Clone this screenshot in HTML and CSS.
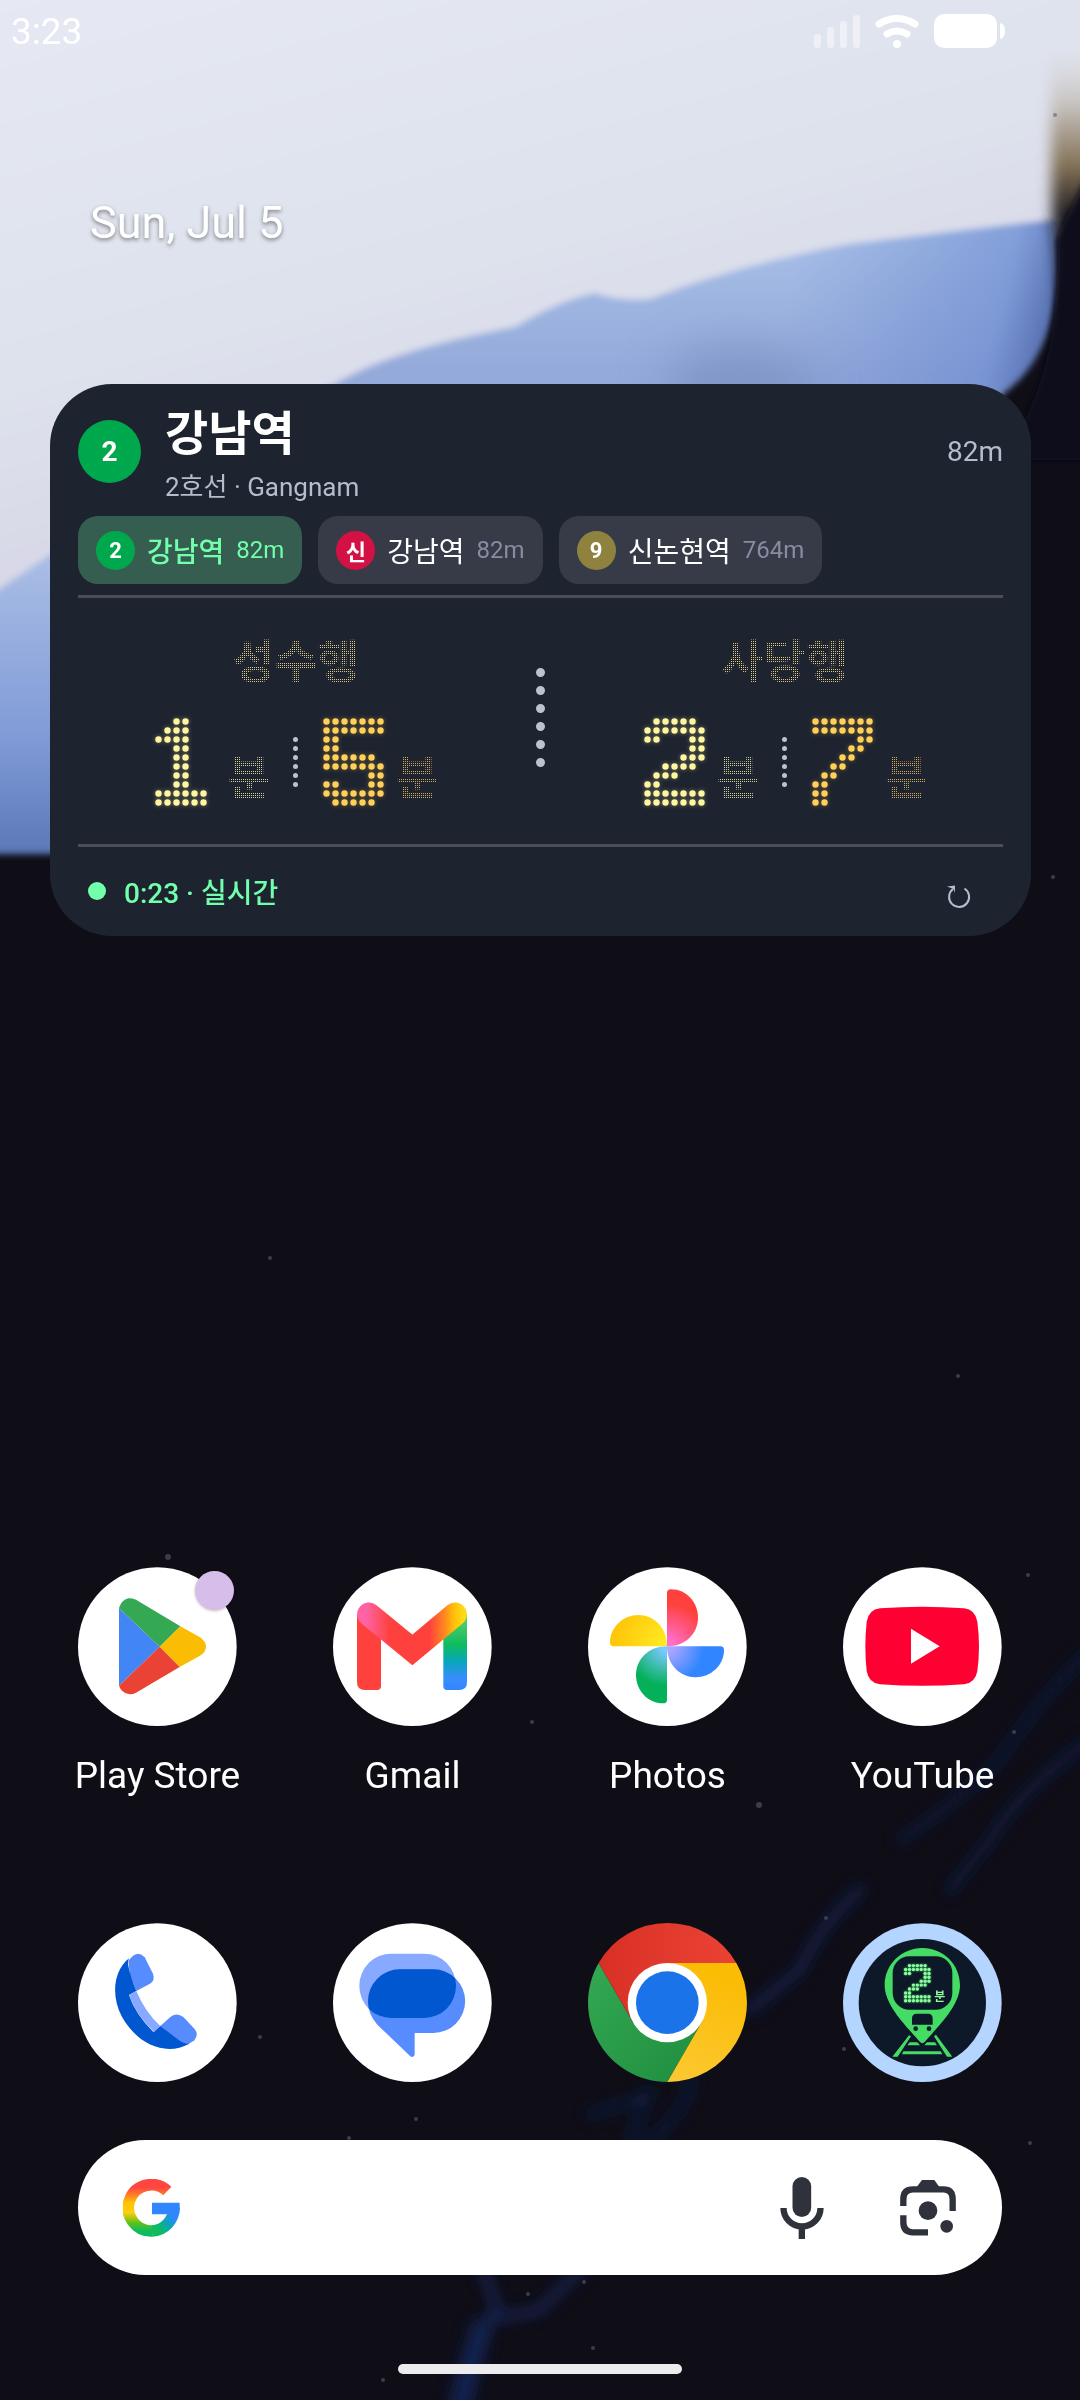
FILE: index.html
```html
<!DOCTYPE html>
<html lang="ko">
  <head>
    <meta charset="UTF-8" />
    <meta name="viewport" content="width=device-width, initial-scale=1.0" />
    <title>Home</title>
    <link rel="stylesheet" href="styles.css">
  </head>
  <body>
    <!-- Wallpaper -->
    <svg class="wallpaper" viewBox="0 0 1080 2400" preserveAspectRatio="none" aria-hidden="true">
      <defs>
        <linearGradient id="sky" x1="0" y1="0" x2="0.35" y2="1">
          <stop offset="0" stop-color="#e6e9f4" />
          <stop offset="0.45" stop-color="#dde1ec" />
          <stop offset="0.65" stop-color="#d7d6e6" />
          <stop offset="1" stop-color="#cfcfe4" />
        </linearGradient>
        <linearGradient id="hill" x1="0" y1="0" x2="0" y2="1">
          <stop offset="0" stop-color="#a9c1e8" />
          <stop offset="0.25" stop-color="#94a9da" />
          <stop offset="0.55" stop-color="#a7bbe4" />
          <stop offset="0.82" stop-color="#7f9ad6" />
          <stop offset="1" stop-color="#5c78b8" />
        </linearGradient>
        <linearGradient id="hillSide" gradientUnits="userSpaceOnUse" x1="800" y1="240" x2="1055" y2="300">
          <stop offset="0" stop-color="#5f80cc" stop-opacity="0" />
          <stop offset="0.8" stop-color="#5f80cc" stop-opacity="0.5" />
          <stop offset="1" stop-color="#4760a4" stop-opacity="0.8" />
        </linearGradient>
        <linearGradient id="rust" x1="0" y1="0" x2="0" y2="1">
          <stop offset="0" stop-color="#d9d6d6" stop-opacity="0" />
          <stop offset="0.15" stop-color="#c4bfbb" />
          <stop offset="0.3" stop-color="#857459" />
          <stop offset="0.45" stop-color="#14131b" />
        </linearGradient>
        <filter id="soft" x="-10%" y="-10%" width="120%" height="120%"><feGaussianBlur stdDeviation="3" /></filter>
        <filter id="haze" filterUnits="userSpaceOnUse" x="0" y="0" width="1080" height="2400"><feGaussianBlur stdDeviation="7" /></filter>
        <filter id="smudge" x="-60%" y="-60%" width="220%" height="220%"><feGaussianBlur stdDeviation="24" /></filter>
      </defs>
      <rect width="1080" height="2400" fill="#0f0e17" />
      <g filter="url(#soft)">
        <path d="M-20 -20H1100V210L1057 240L1000 400L400 850H-20Z" fill="url(#sky)" />
        <path d="M-20 602L50 555Q180 450 335 384Q390 350 515 327Q560 300 595 293Q620 302 650 299Q740 264 850 244L1057 219C1062 300 1052 360 1000 396L700 700L100 854H-20Z" fill="url(#hill)" />
        <path d="M800 253L850 244L1057 219C1062 300 1052 360 1000 396L700 700Z" fill="url(#hillSide)" />
      </g>
      <ellipse cx="740" cy="385" rx="75" ry="40" fill="#6d82b3" opacity="0.5" filter="url(#smudge)" />
      <path d="M1050 50H1100V430H1062Q1064 300 1052 215Z" fill="url(#rust)" filter="url(#haze)" />
      <path d="M1058 235L1100 150V460H1000Q1062 380 1058 235Z" fill="#11101a" filter="url(#soft)" />
      <g fill="none" stroke="#1b2a68" stroke-linecap="round" filter="url(#haze)">
        <path d="M1090 1650Q1030 1710 1000 1760Q960 1800 900 1840" stroke-width="8" opacity="0.5" />
        <path d="M1090 1740Q1020 1790 990 1840L950 1890" stroke-width="9" opacity="0.5" />
        <path d="M860 1890Q820 1925 800 1970L750 2010" stroke-width="12" opacity="0.5" />
        <path d="M690 2080Q690 2110 640 2150M650 2090L630 2140M590 2115L650 2095" stroke-width="8" opacity="0.5" />
        <path d="M600 2250L540 2310L500 2318L480 2260M495 2310Q470 2350 460 2420" stroke-width="9" opacity="0.7" />
        <path d="M480 2330L455 2420" stroke-width="24" opacity="0.5" />
      </g>
      <g fill="#5b5b68" opacity="0.6">
        <circle cx="168" cy="1557" r="3" /><circle cx="270" cy="1258" r="2" /><circle cx="532" cy="1722" r="2" />
        <circle cx="958" cy="1376" r="2" /><circle cx="1028" cy="1575" r="2" /><circle cx="1014" cy="1732" r="2" />
        <circle cx="759" cy="1805" r="3" /><circle cx="349" cy="2138" r="2" /><circle cx="416" cy="2119" r="2" />
        <circle cx="260" cy="2037" r="2" /><circle cx="584" cy="2282" r="2" /><circle cx="528" cy="2294" r="2" />
        <circle cx="383" cy="2380" r="2" /><circle cx="593" cy="2348" r="2" /><circle cx="1053" cy="877" r="2" />
        <circle cx="844" cy="2049" r="2" /><circle cx="1030" cy="2143" r="2" /><circle cx="826" cy="1918" r="2" />
        <circle cx="1055" cy="115" r="2" />
      </g>
    </svg>

    <!-- Status Bar -->
    <header class="status-bar">
      <time>3:23</time>
      <div class="status-icons">
        <svg width="46" height="33" viewBox="0 0 46 33" fill="#fff" opacity="0.45" aria-label="Signal" role="img">
          <rect x="0" y="19" width="7" height="14" rx="3" /><rect x="13" y="12" width="7" height="21" rx="3" />
          <rect x="26" y="6" width="7" height="27" rx="3" /><rect x="39" y="0" width="7" height="33" rx="3" />
        </svg>
        <svg width="44" height="33" viewBox="0 0 44 33" aria-label="Wi-Fi" role="img">
          <g fill="none" stroke="#fff" stroke-width="7" stroke-linecap="round">
            <path d="M4 9Q22 -2 40 9" /><path d="M12 19Q22 13 32 19" />
          </g>
          <ellipse cx="22" cy="29" rx="4" ry="4" fill="#fff" />
        </svg>
        <svg width="71" height="34" viewBox="0 0 71 34" fill="#fff" aria-label="Battery" role="img">
          <rect width="63" height="34" rx="10" /><path d="M66 9Q71 10 71 17Q71 24 66 25Z" />
        </svg>
      </div>
    </header>

    <div class="date">Sun, Jul 5</div>

    <!-- Subway Widget -->
    <main class="widget">
      <div class="station">
        <span class="line-badge line-2">2</span>
        <div class="station-text">
          <h1>강남역</h1>
          <p>2호선 · Gangnam</p>
        </div>
        <span class="distance">82m</span>
      </div>

      <div class="chips">
        <button class="chip active" type="button"><span class="chip-badge line-2">2</span><span class="chip-name">강남역</span><span class="chip-distance">82m</span></button>
        <button class="chip" type="button"><span class="chip-badge line-sin">신</span><span class="chip-name">강남역</span><span class="chip-distance">82m</span></button>
        <button class="chip" type="button"><span class="chip-badge line-9">9</span><span class="chip-name">신논현역</span><span class="chip-distance">764m</span></button>
      </div>

      <div class="board">
        <section class="direction">
          <h2 class="led-text">성수행</h2>
          <div class="times">
            <span class="digit first">1</span><span class="led-text minute first">분</span>
            <svg class="small-dots" width="5" height="50" viewBox="0 0 5 50" aria-hidden="true"><line x1="2.5" y1="2.5" x2="2.5" y2="48" /></svg>
            <span class="digit second">5</span><span class="led-text minute second">분</span>
          </div>
        </section>
        <svg class="big-dots" width="9" height="99" viewBox="0 0 9 99" aria-hidden="true"><line x1="4.5" y1="4.5" x2="4.5" y2="95" /></svg>
        <section class="direction">
          <h2 class="led-text">사당행</h2>
          <div class="times">
            <span class="digit first">2</span><span class="led-text minute first">분</span>
            <svg class="small-dots" width="5" height="50" viewBox="0 0 5 50" aria-hidden="true"><line x1="2.5" y1="2.5" x2="2.5" y2="48" /></svg>
            <span class="digit second">7</span><span class="led-text minute second">분</span>
          </div>
        </section>
      </div>

      <div class="widget-footer">
        <span class="live-dot"></span>
        <span class="live-text">0:23 · 실시간</span>
        <button class="refresh" type="button" aria-label="Refresh">
          <svg width="24" height="24" viewBox="0 0 24 24" aria-hidden="true">
            <path d="M17.500 3.500A10 10 0 1 1 6 4" fill="none" stroke="#b4bccd" stroke-width="2" />
            <path d="M0 1.500L8 .5V8L6.500 4Z" fill="#b4bccd" />
          </svg>
        </button>
      </div>
    </main>

    <!-- Apps -->
    <nav class="apps">
      <a class="app" href="#">
        <span class="icon-wrap">
          <svg class="icon" viewBox="84 80 477 477" aria-hidden="true">
            <circle cx="322" cy="319" r="238" fill="#fff" />
            <path d="M207 203L329 319L207 436Z" fill="#4285f4" />
            <path d="M207 203Q214 180 235 174Q247 172 258 178L391 258L329 319Z" fill="#34a853" />
            <path d="M391 258L450 291Q468 304 468 319Q468 334 450 346L389 380L329 319Z" fill="#fbbc04" />
            <path d="M329 319L389 380L258 457Q247 463 235 461Q214 456 207 436Z" fill="#ea4335" />
          </svg>
          <span class="notice"></span>
        </span>
        <span class="app-name">Play Store</span>
      </a>
      <a class="app" href="#">
        <svg class="icon" viewBox="849 80 477 477" aria-hidden="true">
          <defs>
            <linearGradient id="gmailTop" gradientUnits="userSpaceOnUse" x1="921" y1="0" x2="1251" y2="0">
              <stop offset="0.08" stop-color="#ff63a5" /><stop offset="0.3" stop-color="#ff413d" />
              <stop offset="0.66" stop-color="#ff413d" /><stop offset="0.8" stop-color="#ff8a1f" />
              <stop offset="0.88" stop-color="#ffbe0a" /><stop offset="0.97" stop-color="#ffdb14" />
            </linearGradient>
            <linearGradient id="gmailLeg" x1="0" y1="0" x2="0" y2="1">
              <stop offset="0.1" stop-color="#4ecb6a" /><stop offset="0.4" stop-color="#0ebc5f" />
              <stop offset="0.62" stop-color="#07a7ba" /><stop offset="0.85" stop-color="#3a8cff" />
              <stop offset="1" stop-color="#3186ff" />
            </linearGradient>
          </defs>
          <circle cx="1087" cy="319" r="238" fill="#fff" />
          <path d="M921 222H993V438Q993 449 981 449H945Q921 449 921 425Z" fill="#ff413d" />
          <path d="M1180 222H1251V425Q1251 449 1227 449H1191Q1180 449 1180 438Z" fill="url(#gmailLeg)" />
          <path d="M957 222L1087 329L1215 222" fill="none" stroke="url(#gmailTop)" stroke-width="71" stroke-linecap="round" />
        </svg>
        <span class="app-name">Gmail</span>
      </a>
      <a class="app" href="#">
        <svg class="icon" viewBox="84 80 477 477" aria-hidden="true">
          <defs>
            <radialGradient id="petalRed" gradientUnits="userSpaceOnUse" cx="321" cy="318" r="170"><stop offset="0.1" stop-color="#ff6fce" /><stop offset="0.75" stop-color="#ff413d" /></radialGradient>
            <radialGradient id="petalYellow" gradientUnits="userSpaceOnUse" cx="321" cy="318" r="170"><stop offset="0.1" stop-color="#ffe921" /><stop offset="0.9" stop-color="#ffc70a" /></radialGradient>
            <radialGradient id="petalGreen" gradientUnits="userSpaceOnUse" cx="321" cy="318" r="170"><stop offset="0.1" stop-color="#78c9ff" /><stop offset="0.7" stop-color="#04b05a" /></radialGradient>
            <radialGradient id="petalBlue" gradientUnits="userSpaceOnUse" cx="321" cy="318" r="170"><stop offset="0.1" stop-color="#aca6ff" /><stop offset="0.65" stop-color="#3186ff" /></radialGradient>
          </defs>
          <circle cx="322" cy="319" r="238" fill="#fff" />
          <path d="M321 318V158Q321 147 333 147C380 147 414 187 414 232C414 280 375 318 321 318Z" fill="url(#petalRed)" />
          <path d="M321 318H160Q150 318 150 306C150 260 190 224 235 224C282 224 321 262 321 318Z" fill="url(#petalYellow)" />
          <path d="M321 318V478Q321 489 309 489C262 489 228 449 228 404C228 358 265 318 321 318Z" fill="url(#petalGreen)" />
          <path d="M321 318H482Q492 318 492 330C492 375 452 411 407 411C360 411 321 374 321 318Z" fill="url(#petalBlue)" />
        </svg>
        <span class="app-name">Photos</span>
      </a>
      <a class="app" href="#">
        <svg class="icon" viewBox="849 80 477 477" aria-hidden="true">
          <circle cx="1087" cy="319" r="238" fill="#fff" />
          <path d="M960 204Q1087 194 1212 204Q1246 208 1252 244Q1262 318 1252 392Q1246 428 1212 432Q1087 441 960 432Q926 428 920 392Q912 318 920 244Q926 208 960 204Z" fill="#ff0033" />
          <path d="M1053 265L1139 318L1053 370Z" fill="#fff" />
        </svg>
        <span class="app-name">YouTube</span>
      </a>
    </nav>

    <!-- Dock -->
    <nav class="apps dock">
      <a class="app" href="#" aria-label="Phone">
        <svg class="icon" viewBox="84 68 477 477" aria-hidden="true">
          <circle cx="322" cy="307" r="238" fill="#fff" />
          <path d="M235 182Q262 145 284 171L309 220Q316 240 300 250L259 272L240 225Z" fill="#578cff" />
          <path d="M331 377L362 349Q381 335 400 350L434 386Q447 403 433 420L415 432L385 425Z" fill="#578cff" />
          <path d="M237 174C187 215 185 290 215 348C260 430 345 470 418 430Q400 430 385 418L331 377L310 395Q255 340 237 284L259 272Q240 225 235 196Q232 185 237 174Z" fill="#0057cf" />
          <path d="M237 284L259 272Q285 335 331 377L312 395Q258 345 237 284Z" fill="#87a9ff" />
        </svg>
      </a>
      <a class="app" href="#" aria-label="Messages">
        <svg class="icon" viewBox="849 68 477 477" aria-hidden="true">
          <clipPath id="bubble"><rect x="928" y="160" width="290" height="193" rx="96" /></clipPath>
          <circle cx="1087" cy="307" r="238" fill="#fff" />
          <rect x="928" y="160" width="290" height="193" rx="96" fill="#87a9ff" />
          <path d="M1050 207H1150A95 95 0 0 1 1150 398H1094V463Q1090 473 1081 468L982 373Q954 342 954 303A96 96 0 0 1 1050 207Z" fill="#578cff" />
          <rect x="954" y="207" width="291" height="191" rx="96" fill="#0057cf" clip-path="url(#bubble)" />
        </svg>
      </a>
      <a class="app" href="#" aria-label="Chrome">
        <svg class="icon" viewBox="84 68 477 477" aria-hidden="true">
          <defs>
            <linearGradient id="chromeRed"><stop offset="0" stop-color="#d93025" /><stop offset="1" stop-color="#ea4335" /></linearGradient>
            <linearGradient id="chromeYellow" x1="0" y1="1" x2="0.3" y2="0"><stop offset="0" stop-color="#fcc934" /><stop offset="1" stop-color="#fbbc04" /></linearGradient>
            <linearGradient id="chromeGreen" x1="0" y1="0" x2="1" y2="1"><stop offset="0" stop-color="#34a853" /><stop offset="1" stop-color="#1e8e3e" /></linearGradient>
          </defs>
          <path d="M116 188A238 238 0 0 0 322 545L425 366L322 307L219 366Z" fill="url(#chromeGreen)" />
          <path d="M529 188A238 238 0 0 1 322 545L425 366L322 188Z" fill="url(#chromeYellow)" />
          <path d="M116 188A238 238 0 0 1 529 188H322V307L219 366Z" fill="url(#chromeRed)" />
          <circle cx="322" cy="307" r="119" fill="#fff" />
          <circle cx="322" cy="307" r="94" fill="#1a73e8" />
        </svg>
      </a>
      <a class="app" href="#" aria-label="Subway">
        <svg class="icon" viewBox="849 68 477 477">
          <circle cx="1087" cy="307" r="238" fill="#b4d5ff" />
          <circle cx="1087" cy="307" r="191" fill="#0d1828" />
          <path d="M1087 143C1150 143 1200 192 1200 255C1200 318 1128 385 1094 425Q1087 432 1080 425C1046 385 974 318 974 255C974 192 1025 143 1087 143Z" fill="#45dc66" />
          <rect x="998" y="168" width="179" height="160" rx="50" fill="#0d1828" />
          <path d="M1056 373V354Q1056 340 1070 340H1104Q1118 340 1118 354V373Z" fill="#0d1828" />
          <circle cx="1067" cy="385" r="7" fill="#0d1828" /><circle cx="1107" cy="385" r="7" fill="#0d1828" />
          <path d="M1047 405L1053 408L1013 469H997ZM1122 408L1128 403L1177 469H1161ZM1049 426H1072L1080 435H1042ZM1101 426H1125L1131 435H1093ZM1030 453H1142L1147 462H1026Z" fill="#45dc66" />
          <g class="icon-digit" data-digit="2" transform="translate(1031 190) scale(1.3)"></g>
          <text class="icon-minute" x="1123" y="302">분</text>
        </svg>
      </a>
    </nav>

    <!-- Search -->
    <form class="search">
      <svg width="57" height="58" viewBox="220 835 171 174" aria-label="Google" role="img">
        <defs>
          <linearGradient id="gLeft" gradientUnits="userSpaceOnUse" x1="0" y1="835" x2="0" y2="1009">
            <stop offset="0.15" stop-color="#ff4641" /><stop offset="0.3" stop-color="#ff8a1f" />
            <stop offset="0.4" stop-color="#ffc107" /><stop offset="0.58" stop-color="#fecf0d" />
            <stop offset="0.75" stop-color="#62c218" /><stop offset="0.9" stop-color="#0ebc5f" />
          </linearGradient>
          <linearGradient id="gRight" gradientUnits="userSpaceOnUse" x1="307" y1="992" x2="376" y2="940">
            <stop offset="0.2" stop-color="#0ebc5f" /><stop offset="0.6" stop-color="#0aa5b8" /><stop offset="0.9" stop-color="#3186ff" />
          </linearGradient>
        </defs>
        <g fill="none" stroke-width="35">
          <path d="M353 871A69.500 69.500 0 1 0 308 991" stroke="url(#gLeft)" />
          <path d="M307 991A69.500 69.500 0 0 0 373 921" stroke="url(#gRight)" />
        </g>
        <path d="M307 906H390V922L388 941H307Z" fill="#3186ff" />
      </svg>
      <input type="search" aria-label="Search" />
      <button type="button" aria-label="Voice search">
        <svg width="44" height="62" viewBox="661 831 131 186" aria-hidden="true">
          <rect x="698" y="831" width="56" height="120" rx="28" fill="#30323b" />
          <path d="M671 924A55 55 0 0 0 782 924M726 979V1017" fill="none" stroke="#30323b" stroke-width="19" />
        </svg>
      </button>
      <button type="button" aria-label="Lens">
        <svg width="56" height="56" viewBox="1020 841 168 168" aria-hidden="true">
          <path d="M1030 919V898Q1030 869 1059 869H1150Q1178 869 1178 898V934M1030 947V968Q1030 998 1059 998H1104" fill="none" stroke="#30323b" stroke-width="19" />
          <path d="M1070 862L1086 841H1123L1138 862Z" fill="#30323b" />
          <circle cx="1104" cy="933" r="28" fill="#30323b" /><circle cx="1160" cy="980" r="19" fill="#30323b" />
        </svg>
      </button>
    </form>

    <div class="home-handle"></div>

    <script src="led.js"></script>
  </body>
</html>
```

FILE: led.js
```js
// lit lamps of each 7x10 LED digit
const lamps = {
  1: ["..##...", ".###...", "####...", "..##...", "..##...", "..##...", "..##...", "..##...", "######.", "######."],
  2: [".#####.", "#######", "##...##", ".....##", "....###", "..####.", ".###...", "##.....", "#######", "#######"],
  5: ["#######", "#######", "##.....", "##.....", "######.", "#######", ".....##", "##...##", "#######", ".#####."],
  7: ["#######", "#######", ".....##", "....##.", "...##..", "..##...", ".##....", "##.....", "##.....", "##....."],
};

function drawDigit(digit, radius) {
  let circles = "";
  lamps[digit].forEach((row, y) => {
    [...row].forEach((cell, x) => {
      if (cell === "#") {
        circles += `<circle cx="${x * 9 + 4.5}" cy="${y * 9 + 4.5}" r="${radius}" />`;
      }
    });
  });
  return circles;
}

document.querySelectorAll(".digit").forEach((el) => {
  const svg = `<svg width="63" height="90" viewBox="0 0 63 90" aria-hidden="true">${drawDigit(el.textContent, 3.2)}</svg>`;
  el.insertAdjacentHTML("beforeend", svg);
});

document.querySelectorAll(".icon-digit").forEach((el) => {
  el.innerHTML = drawDigit(el.dataset.digit, 4);
});
```

FILE: styles.css
```css
* {
  box-sizing: border-box;
}

body {
  margin: 0;
  min-height: 100vh;
  display: flex;
  flex-direction: column;
  position: relative;
  background-color: #0f0e17;
  color: white;
  font-family: Roboto, "Noto Sans CJK KR", sans-serif;
}

h1, h2, p {
  margin: 0;
}

svg {
  display: block;
  flex-shrink: 0;
}

button {
  border: none;
  padding: 0;
  background: none;
  color: inherit;
  font-family: inherit;
}

.wallpaper {
  position: absolute;
  inset: 0;
  width: 100%;
  height: 100%;
  z-index: -1;
}

/* status bar */
.status-bar {
  display: flex;
  align-items: center;
  justify-content: space-between;
  height: 62px;
  padding: 0 75px 0 11px;
  font-size: 37px;
}

.status-icons {
  display: flex;
  align-items: center;
  gap: 15px;
}

.date {
  margin: 134px 90px 0;
  font-size: 45px;
  line-height: 54px;
  text-shadow: 0 2px 4px rgba(0, 0, 0, 0.45);
}

/* widget */
.widget {
  margin: 134px 49px 0 50px;
  padding: 21px 28px 0;
  border-radius: 62px;
  background-color: #1e242f;
}

.station {
  display: flex;
  align-items: center;
  height: 103px;
}

.line-badge, .chip-badge {
  display: flex;
  align-items: center;
  justify-content: center;
  flex-shrink: 0;
  border-radius: 50%;
  color: white;
  font-weight: bold;
}

.line-badge {
  width: 63px;
  height: 63px;
  margin-bottom: 10px;
  font-size: 28px;
}

.line-2 {
  background-color: #00a84d;
}

.line-sin {
  background-color: #d31145;
}

.line-9 {
  background-color: #8f823f;
}

.station-text {
  flex: 1;
  margin-left: 24px;
}

.station-text h1 {
  font-size: 47px;
  line-height: 60px;
  font-weight: bold;
}

.station-text p {
  font-size: 26px;
  line-height: 46px;
  color: #b4bccd;
}

.distance {
  margin-bottom: 10px;
  font-size: 28px;
  color: #b4bccd;
}

.chips {
  display: flex;
  gap: 16px;
  margin-top: 8px;
}

.chip {
  display: flex;
  align-items: center;
  gap: 12px;
  height: 68px;
  padding: 0 18px;
  border-radius: 20px;
  background-color: #363b47;
}

.chip-badge {
  width: 39px;
  height: 39px;
  font-size: 22px;
}

.chip-name {
  font-size: 28px;
}

.chip-distance {
  font-size: 24px;
  color: #868da3;
}

.chip.active {
  background-color: #355e51;
  color: #72ffac;
}

.chip.active .chip-name {
  font-weight: 500;
}

.chip.active .chip-distance {
  color: #72ffac;
}

/* LED board */
.board {
  display: grid;
  grid-template-columns: 1fr 53px 1fr;
  align-items: center;
  justify-items: center;
  margin-top: 11px;
  padding: 35px 0 37px;
  border-top: 3px solid #4a4d57;
  border-bottom: 3px solid #4a4d57;
}

.direction {
  display: flex;
  flex-direction: column;
  align-items: center;
  gap: 26px;
}

/* text showing through a fine grid of lamps */
.led-text {
  font-size: 46px;
  line-height: 58px;
  font-weight: bold;
  color: transparent;
  background: conic-gradient(#dcc985 25%, transparent 0) 0 0 / 2px 2px;
  -webkit-background-clip: text;
  background-clip: text;
}

.led-text.first {
  background-image: conic-gradient(#d0d094 25%, transparent 0);
}

.led-text.second {
  background-image: conic-gradient(#d0a95c 25%, transparent 0);
}

.times {
  display: flex;
  align-items: center;
}

.digit {
  position: relative;
  width: 63px;
  height: 90px;
  font-size: 90px;
  line-height: 90px;
  text-align: center;
  color: transparent;
}

.digit svg {
  position: absolute;
  inset: 0;
}

.digit.first svg {
  fill: #fff6a0;
  filter: drop-shadow(0 0 2px rgba(255, 246, 160, 0.4));
}

.digit.second svg {
  fill: #ffd05a;
  filter: drop-shadow(0 0 2px rgba(255, 190, 60, 0.4));
}

.minute {
  align-self: flex-end;
  margin: 0 23px 0 11px;
}

.minute.second {
  margin-right: 0;
}

.small-dots, .big-dots {
  fill: none;
  stroke: #bcc2d0;
  stroke-linecap: round;
}

.small-dots {
  margin-right: 24px;
  stroke-width: 5px;
  stroke-dasharray: 0 9;
}

.big-dots {
  margin-bottom: 6px;
  stroke-width: 9px;
  stroke-dasharray: 0 18;
}

.widget-footer {
  display: flex;
  align-items: center;
  height: 89px;
  padding: 0 32px 2px 10px;
}

.live-dot {
  width: 18px;
  height: 18px;
  border-radius: 50%;
  background-color: #72ffac;
}

.live-text {
  flex: 1;
  margin-left: 18px;
  font-size: 28px;
  font-weight: 500;
  color: #72ffac;
}

.refresh {
  margin-top: 12px;
}

/* apps */
.apps {
  display: grid;
  grid-template-columns: repeat(4, 1fr);
  margin-top: auto;
  padding: 0 30px;
}

.dock {
  margin-top: 122px;
}

.app {
  display: flex;
  flex-direction: column;
  align-items: center;
  color: white;
  text-decoration: none;
}

.icon {
  width: 159px;
  height: 159px;
}

.icon-wrap {
  position: relative;
}

.notice {
  position: absolute;
  top: 4px;
  right: 3px;
  width: 39px;
  height: 39px;
  border-radius: 50%;
  background-color: #d7bdea;
  box-shadow: 0 1px 3px rgba(0, 0, 0, 0.25);
}

.app-name {
  margin-top: 24px;
  font-size: 37px;
  line-height: 51px;
}

.icon-digit {
  fill: #8dfb9c;
  filter: drop-shadow(0 0 3px #2fae55);
}

.icon-minute {
  fill: #8dfb9c;
  font-size: 36px;
  font-weight: bold;
}

/* search */
.search {
  display: flex;
  align-items: center;
  height: 135px;
  margin: 58px 78px 89px;
  padding: 0 46px 0 45px;
  border-radius: 68px;
  background-color: white;
}

.search input {
  flex: 1;
  min-width: 0;
  height: 80px;
  margin: 0 24px;
  border: none;
  outline: none;
  background: none;
  font-size: 38px;
}

.search button:last-child {
  margin-left: 76px;
}

.home-handle {
  width: 284px;
  height: 10px;
  margin: 0 auto 26px;
  border-radius: 5px;
  background-color: #ececec;
}
```
